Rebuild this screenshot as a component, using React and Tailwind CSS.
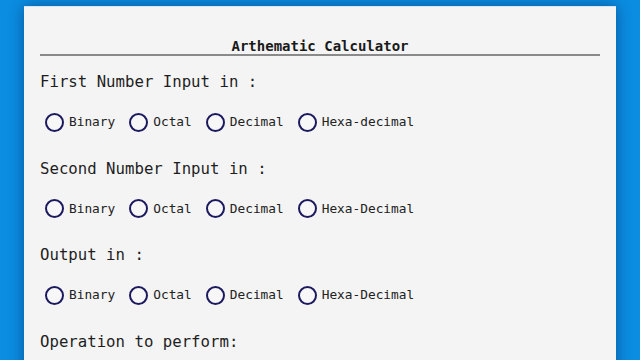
import React from "react";

const mono = { fontFamily: '"DejaVu Sans Mono", monospace' };

function Radio({ label }) {
  return (
    <div className="flex items-center">
      <span className="block w-[19px] h-[19px] rounded-full border-2 border-[#1c1a5e] bg-[#f7f7f7]" />
      <span className="ml-[5px] text-[12.8px] leading-5 text-[#222]">{label}</span>
    </div>
  );
}

function Section({ title, options, first }) {
  return (
    <div className={first ? "mt-[14px]" : "mt-[24.5px]"}>
      <div className="h-6 text-[15.7px] leading-6 text-[#1e1e1e]">{title}</div>
      <div className="mt-[18px] ml-[5px] flex items-center gap-[14px] h-5">
        {options.map((o) => (
          <Radio key={o} label={o} />
        ))}
      </div>
    </div>
  );
}

export default function App() {
  return (
    <div className="w-[640px] h-[360px] overflow-hidden bg-[#0b8de2] pt-[6px]" style={mono}>
      <div className="ml-[24px] w-[592px] h-[400px] bg-[#f4f4f4] border-t border-[#d4e6f4] shadow-[0_0_14px_rgba(0,20,60,0.45)] px-4 pt-[31px]">
        <div className="h-[18px] leading-4 text-center text-[14px] font-bold text-[#1a1a1a] border-b-2 border-[#8a8a8a]">
          Arthematic Calculator
        </div>
        <Section first title="First Number Input in :" options={["Binary", "Octal", "Decimal", "Hexa-decimal"]} />
        <Section title="Second Number Input in :" options={["Binary", "Octal", "Decimal", "Hexa-Decimal"]} />
        <Section title="Output in :" options={["Binary", "Octal", "Decimal", "Hexa-Decimal"]} />
        <Section title="Operation to perform:" options={[]} />
      </div>
    </div>
  );
}
